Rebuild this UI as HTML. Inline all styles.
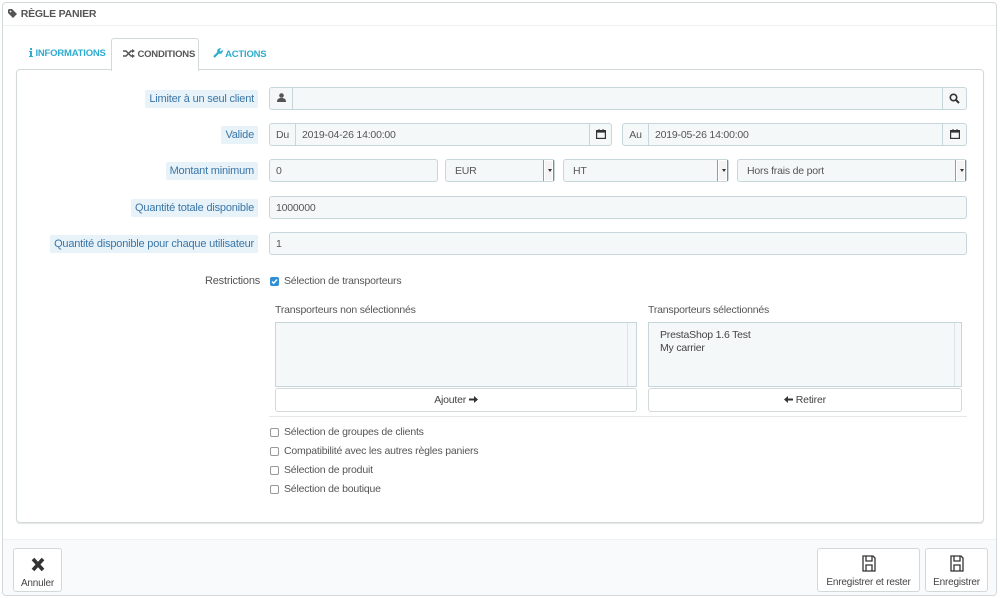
<!DOCTYPE html>
<html><head><meta charset="utf-8"><style>
*{box-sizing:border-box;margin:0;padding:0}
body{width:1000px;height:598px;background:#fff;font-family:"Liberation Sans",sans-serif;font-size:10.5px;color:#555;position:relative;overflow:hidden;letter-spacing:-0.2px}
.a{position:absolute}
.panel{left:2px;top:2px;width:995px;height:594px;border:1px solid #d3d8db;border-radius:4px}
.inp{position:absolute;height:23px;background:#f5f8f9;border:1px solid #c7d6db;border-radius:3px;padding-left:6px;line-height:23px;color:#555}
.add{position:absolute;height:23px;background:#f5f8f9;border:1px solid #c7d6db;text-align:center;line-height:22px}
.lbl{position:absolute;right:742px;height:18px;line-height:19px;padding:0 4px;background:#e7f2f9;color:#3b76a6;font-size:11px;border-radius:2px}
.sel{position:absolute;height:23px;background:#f5f8f9;border:1px solid #c7d6db;border-radius:3px;padding-left:9px;line-height:23px}
.sel:after{content:"";position:absolute;right:0;top:0;width:9px;height:21px;background:#f4f4f4;border-left:1px solid #999;border-right:1px solid #888;box-shadow:inset 0 0 0 1px #fff}
.sel b{position:absolute;right:2px;top:9px;border-left:2.5px solid transparent;border-right:2.5px solid transparent;border-top:3px solid #333;z-index:2}
.cb{position:absolute;width:9px;height:9px;border:1px solid #999;border-radius:2px;background:#fff}
.btn{position:absolute;border:1px solid #d3d8db;border-radius:3px;background:#fff;text-align:center;font-size:10px;color:#444}
</style></head><body>
<div class="a panel"></div>
<div class="a" style="left:8px;top:8px;font-size:10.5px;font-weight:bold;color:#555">
<svg width="10" height="9" viewBox="0 0 10 9" style="vertical-align:-1px"><path d="M0 1v3l5 5 4-4-5-5H1z" fill="#555"/><circle cx="2.5" cy="2.5" r="0.9" fill="#fff"/></svg> RÈGLE PANIER</div>
<div class="a" style="left:3px;top:25px;width:993px;height:1px;background:#eef0f1"></div>
<!-- tabs -->
<div class="a" style="left:29px;top:48px;color:#2eacce;font-weight:bold;font-size:9.5px"><svg width="4" height="9" viewBox="0 0 4 9" style="vertical-align:-1px"><rect x="1" y="0" width="2" height="2" fill="#2eacce"/><path d="M0 3h3v5h1v1H0V8h1V4H0z" fill="#2eacce"/></svg> INFORMATIONS</div>
<div class="a" style="left:111px;top:38px;width:88px;height:33px;border:1px solid #d3d8db;border-bottom:none;border-radius:3px 3px 0 0;background:#fff;z-index:2;padding:10px 0 0 11px;font-weight:bold;font-size:9.5px;color:#555"><svg width="12" height="9" viewBox="0 0 12 9" style="vertical-align:-1px"><path d="M0 2h3l5 5h2M0 7h3l5-5h2" stroke="#555" stroke-width="1.5" fill="none"/><path d="M9 0l3 2-3 2zM9 5l3 2-3 2z" fill="#555"/></svg> CONDITIONS</div>
<div class="a" style="left:213px;top:48px;color:#2eacce;font-weight:bold;font-size:9.5px"><svg width="10" height="10" viewBox="0 0 10 10" style="vertical-align:-1px"><path d="M1 9l5-5" stroke="#2eacce" stroke-width="2.2"/><circle cx="7" cy="3" r="2.8" fill="#2eacce"/><path d="M7 3l3-3" stroke="#fff" stroke-width="1.6"/></svg> ACTIONS</div>
<div class="a" style="left:16px;top:69px;width:968px;height:454px;border:1px solid #d3d8db;border-radius:4px;box-shadow:0 1px 1px #e4e4e4"></div>
<!-- row1 -->
<div class="lbl" style="top:90px">Limiter à un seul client</div>
<div class="add" style="left:269px;top:87px;width:24px;border-radius:3px 0 0 3px"><svg width="9" height="9" viewBox="0 0 9 9"><circle cx="4.5" cy="2.5" r="2.3" fill="#555"/><path d="M0 9c0-3 1.5-4 4.5-4s4.5 1 4.5 4z" fill="#555"/></svg></div>
<div class="inp" style="left:292px;top:87px;width:651px;border-radius:0"></div>
<div class="add" style="left:942px;top:87px;width:25px;border-radius:0 3px 3px 0"><svg width="11" height="11" viewBox="0 0 11 11" style="vertical-align:-2px"><circle cx="4.5" cy="4.5" r="3.2" fill="none" stroke="#333" stroke-width="1.6"/><path d="M7 7l3 3" stroke="#333" stroke-width="2"/></svg></div>
<!-- valide -->
<div class="lbl" style="top:126px">Valide</div>
<div class="add" style="left:269px;top:123px;width:27px;border-radius:3px 0 0 3px">Du</div>
<div class="inp" style="left:295px;top:123px;width:295px;border-radius:0">2019-04-26 14:00:00</div>
<div class="add" style="left:589px;top:123px;width:23px;border-radius:0 3px 3px 0"><svg width="10" height="10" viewBox="0 0 10 10" style="vertical-align:-1px"><rect x="0.6" y="1.6" width="8.8" height="7.8" fill="none" stroke="#333" stroke-width="1.2"/><rect x="0.6" y="1.6" width="8.8" height="2" fill="#333"/><path d="M3 0v2M7 0v2" stroke="#333"/></svg></div>
<div class="add" style="left:622px;top:123px;width:27px;border-radius:3px 0 0 3px">Au</div>
<div class="inp" style="left:648px;top:123px;width:295px;border-radius:0">2019-05-26 14:00:00</div>
<div class="add" style="left:942px;top:123px;width:25px;border-radius:0 3px 3px 0"><svg width="10" height="10" viewBox="0 0 10 10" style="vertical-align:-1px"><rect x="0.6" y="1.6" width="8.8" height="7.8" fill="none" stroke="#333" stroke-width="1.2"/><rect x="0.6" y="1.6" width="8.8" height="2" fill="#333"/><path d="M3 0v2M7 0v2" stroke="#333"/></svg></div>
<!-- montant -->
<div class="lbl" style="top:162px">Montant minimum</div>
<div class="inp" style="left:269px;top:159px;width:169px">0</div>
<div class="sel" style="left:445px;top:159px;width:110px">EUR<b></b></div>
<div class="sel" style="left:563px;top:159px;width:166px">HT<b></b></div>
<div class="sel" style="left:737px;top:159px;width:230px">Hors frais de port<b></b></div>
<div class="lbl" style="top:199px">Quantité totale disponible</div>
<div class="inp" style="left:269px;top:196px;width:698px">1000000</div>
<div class="lbl" style="top:235px">Quantité disponible pour chaque utilisateur</div>
<div class="inp" style="left:269px;top:232px;width:698px">1</div>
<!-- restrictions -->
<div class="a" style="left:205px;top:275px;font-size:11px;color:#555">Restrictions</div>
<div class="cb" style="left:270px;top:277px;background:#2e8ed6;border-color:#2e8ed6"><svg width="7" height="7" viewBox="0 0 7 7" style="position:absolute;left:0;top:0"><path d="M1 3.5l1.7 1.7L6 1.5" stroke="#fff" stroke-width="1.4" fill="none"/></svg></div>
<div class="a" style="left:284px;top:275px">Sélection de transporteurs</div>
<div class="a" style="left:275px;top:304px">Transporteurs non sélectionnés</div>
<div class="a" style="left:648px;top:304px">Transporteurs sélectionnés</div>
<div class="a" style="left:275px;top:322px;width:362px;height:65px;border:1px solid #c7d6db;background:#f5f8f9"><div class="a" style="right:0;top:0;width:9px;height:63px;border-left:1px solid #dde3e6"></div></div>
<div class="a" style="left:648px;top:322px;width:314px;height:65px;border:1px solid #c7d6db;background:#f5f8f9;padding:6px 0 0 11px;line-height:13px;color:#444">PrestaShop 1.6 Test<br>My carrier<div class="a" style="right:0;top:0;width:7px;height:63px;border-left:1px solid #dde3e6"></div></div>
<div class="btn" style="left:275px;top:388px;width:362px;height:24px;line-height:23px;font-size:10.5px">Ajouter <svg width="9" height="9" viewBox="0 0 9 9" style="vertical-align:-1px"><path d="M0 3.5h5V1l4 3.5L5 8V5.5H0z" fill="#333"/></svg></div>
<div class="btn" style="left:648px;top:388px;width:314px;height:24px;line-height:23px;font-size:10.5px"><svg width="9" height="9" viewBox="0 0 9 9" style="vertical-align:-1px"><path d="M9 3.5H4V1L0 4.5 4 8V5.5h5z" fill="#333"/></svg> Retirer</div>
<div class="a" style="left:269px;top:416px;width:698px;height:1px;background:#e4e8ea"></div>
<div class="cb" style="left:270px;top:428px"></div><div class="a" style="left:284px;top:426px">Sélection de groupes de clients</div>
<div class="cb" style="left:270px;top:447px"></div><div class="a" style="left:284px;top:445px">Compatibilité avec les autres règles paniers</div>
<div class="cb" style="left:270px;top:466px"></div><div class="a" style="left:284px;top:464px">Sélection de produit</div>
<div class="cb" style="left:270px;top:485px"></div><div class="a" style="left:284px;top:483px">Sélection de boutique</div>
<!-- footer -->
<div class="a" style="left:3px;top:539px;width:993px;height:56px;background:#f8fafc;border-top:1px solid #eef0f1;border-radius:0 0 4px 4px"></div>
<div class="btn" style="left:13px;top:548px;width:49px;height:44px"><svg width="14" height="15" viewBox="0 0 14 15" style="margin-top:8px"><path d="M2 2l10 11M12 2L2 13" stroke="#333" stroke-width="3.6"/></svg><div style="margin-top:3px">Annuler</div></div>
<div class="btn" style="left:817px;top:548px;width:103px;height:44px"><svg width="14" height="17" viewBox="0 0 14 17" style="margin-top:6px"><path d="M1 1h10l2 2v13H1z M4 1v5h6V1 M4 10h6v6H4z" fill="none" stroke="#333" stroke-width="1.3"/></svg><div style="margin-top:2px">Enregistrer et rester</div></div>
<div class="btn" style="left:925px;top:548px;width:63px;height:44px"><svg width="14" height="17" viewBox="0 0 14 17" style="margin-top:6px"><path d="M1 1h10l2 2v13H1z M4 1v5h6V1 M4 10h6v6H4z" fill="none" stroke="#333" stroke-width="1.3"/></svg><div style="margin-top:2px">Enregistrer</div></div>
</body></html>
